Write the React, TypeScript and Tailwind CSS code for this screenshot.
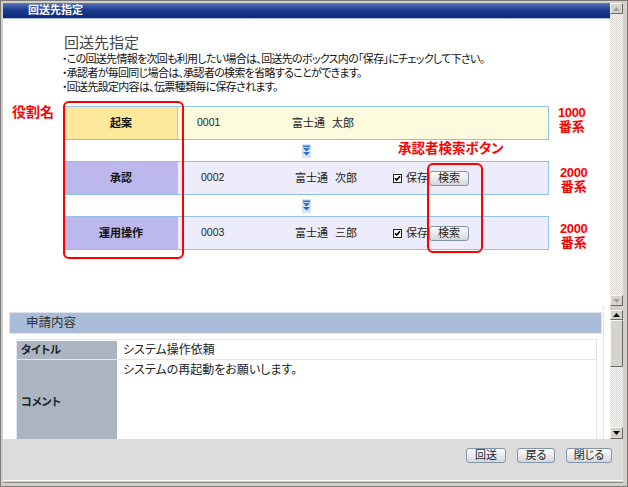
import React from "react";

const F =
  "font-['Liberation_Sans','Noto_Sans_CJK_JP',sans-serif] [font-feature-settings:'palt']";

function ScrollBtn({ up, dim, h }: { up?: boolean; dim?: boolean; h: string }) {
  return (
    <div
      className={`${h} w-full shrink-0 bg-[#d6d3cc] border border-t-[#f6f6f6] border-l-[#f6f6f6] border-r-[#6b6b6b] border-b-[#6b6b6b] flex items-center justify-center`}
    >
      <svg width="7" height="4" viewBox="0 0 7 4">
        <path d={up ? "M0 4L3.5 0L7 4Z" : "M0 0L3.5 4L7 0Z"} fill={dim ? "#a0a0a0" : "#000"} />
      </svg>
    </div>
  );
}

function Track() {
  return (
    <div className="flex-1 bg-[#ebe9e3] bg-[image:repeating-conic-gradient(#f8f7f3_0%_25%,#d9d7cf_0%_50%)] bg-[length:2px_2px]" />
  );
}

function Chev() {
  return (
    <div className="h-[21px] flex items-center justify-center">
      <div className="w-[9px] h-[14px] bg-[#d5e5f7] flex items-center justify-center">
        <svg width="9" height="12" viewBox="0 0 9 12">
          <rect x="1" y="0.5" width="7" height="1.6" fill="#2e6ed2" />
          <path d="M1 3H8L4.5 6.5Z" fill="#2e6ed2" />
          <path d="M1 7H8L4.5 10.5Z" fill="#2e6ed2" />
        </svg>
      </div>
    </div>
  );
}

function Check() {
  return (
    <svg width="9" height="9" viewBox="0 0 9 9" className="shrink-0">
      <rect x="0.5" y="0.5" width="8" height="8" fill="#fff" stroke="#222" />
      <path d="M2 4.2L3.7 6L7 2.3" fill="none" stroke="#000" strokeWidth="1.6" />
    </svg>
  );
}

function SmallBtn({ children, w }: { children: React.ReactNode; w: string }) {
  return (
    <div
      className={`${w} h-[15px] shrink-0 rounded-[3px] border border-[#8395a8] bg-[linear-gradient(#fbfbfb,#e9ebee_50%,#d3d7dc)] text-[11px] leading-[13px] text-center text-[#222]`}
    >
      {children}
    </div>
  );
}

function Row({
  role,
  roleBg,
  bg,
  numBox,
  num,
  name1,
  name2,
  save,
}: {
  role: string;
  roleBg: string;
  bg: string;
  numBox: string;
  num: string;
  name1: string;
  name2: string;
  save?: boolean;
}) {
  return (
    <div className={`h-[34px] border border-[#8ec2ea] flex ${bg}`}>
      <div
        className={`w-[113px] border-r border-[#a9cbe9] ${roleBg} flex items-center justify-center font-bold text-[11px] text-[#111]`}
      >
        {role}
      </div>
      <div className="flex-1 flex items-center text-[11px]">
        <span className={`${numBox} text-[10.5px]`}>{num}</span>
        <span className="w-[98px] shrink-0 flex gap-[7px]">
          <span>{name1}</span>
          <span>{name2}</span>
        </span>
        {save && (
          <>
            <Check />
            <span className="ml-[4px] w-[23px] shrink-0">保存</span>
            <SmallBtn w="w-[40px]">検索</SmallBtn>
          </>
        )}
      </div>
    </div>
  );
}

function Ann({ pos, n }: { pos: string; n: string }) {
  return (
    <div className={`absolute ${pos} text-[13px] leading-[14px] font-bold text-[#ff0000] text-center`}>
      <div className="tracking-[-0.4px]">{n}</div>
      <div>番系</div>
    </div>
  );
}

export default function App() {
  return (
    <div
      className={`relative w-[628px] h-[487px] overflow-hidden bg-[#d4d0c8] border border-[#7a7a7a] pl-[2px] pt-[2px] pr-[4px] flex flex-col text-[#222] ${F}`}
    >
      {/* top panel */}
      <div className="h-[303px] flex shrink-0">
        <div className="flex-1 bg-white flex flex-col overflow-hidden">
          <div className="h-[15px] shrink-0 bg-[linear-gradient(#5a78bd,#1d3c8f_45%,#0b2878)] text-white font-bold text-[11px] leading-[15px] pl-[25px]">
            回送先指定
          </div>
          <div className="h-px shrink-0 bg-[#a9bfe4]" />
          <div className="pl-[61px]">
            <div className="mt-[15px] text-[15px] leading-[18px] text-[#454545]">回送先指定</div>
            <div className="-ml-[2px] text-[11px] leading-[14px] tracking-[-0.7px] text-[#111]">
              <p>・この回送先情報を次回も利用したい場合は、回送先のボックス内の「保存」にチェックして下さい。</p>
              <p>・承認者が毎回同じ場合は、承認者の検索を省略することができます。</p>
              <p>・回送先設定内容は、伝票種類毎に保存されます。</p>
            </div>
            <div className="mt-[12px] w-[485px] flex flex-col">
              <Row
                role="起案"
                roleBg="bg-[#fde89b]"
                bg="bg-[#fdfbdd]"
                numBox="w-[114px] pl-[19px] shrink-0"
                num="0001"
                name1="富士通"
                name2="太郎"
              />
              <Chev />
              <Row
                role="承認"
                roleBg="bg-[#bcb7ec]"
                bg="bg-[#ececfb]"
                numBox="w-[117px] pl-[23px] shrink-0"
                num="0002"
                name1="富士通"
                name2="次郎"
                save
              />
              <Chev />
              <Row
                role="運用操作"
                roleBg="bg-[#bcb7ec]"
                bg="bg-[#ececfb]"
                numBox="w-[117px] pl-[23px] shrink-0"
                num="0003"
                name1="富士通"
                name2="三郎"
                save
              />
            </div>
          </div>
        </div>
        <div className="w-[13px] flex flex-col">
          <ScrollBtn up dim h="h-[11px]" />
          <Track />
          <ScrollBtn dim h="h-[11px]" />
        </div>
      </div>

      {/* bottom panel */}
      <div className="h-[133px] flex shrink-0">
        <div className="flex-1 bg-white overflow-hidden">
          <div className="ml-[6px] w-[595px] h-full border-r border-dotted border-[#cfd3da] pt-[6px]">
            <div className="border border-[#dfe4ea] w-[593px]">
              <div className="h-[20px] bg-[#a9bdd9] text-[12.5px] leading-[20px] pl-[16px] text-[#333]">
                申請内容
              </div>
            </div>
            <div className="ml-[7px] mt-[5px] w-[581px] border border-[#e3e7ed] pt-px">
              <div className="flex h-[19px] border-b border-[#e3e7ed]">
                <div className="w-[100px] bg-[#abb5c2] font-bold text-[11px] leading-[18px] pl-[4px] text-[#222]">
                  タイトル
                </div>
                <div className="flex-1 text-[12px] leading-[18px] pl-[6px]">システム操作依頼</div>
              </div>
              <div className="flex h-[84px]">
                <div className="w-[100px] bg-[#abb5c2] font-bold text-[11px] flex items-center pl-[4px] text-[#222]">
                  コメント
                </div>
                <div className="flex-1 text-[12px] leading-[18px] pl-[6px] pt-[1px]">
                  システムの再起動をお願いします。
                </div>
              </div>
            </div>
          </div>
        </div>
        <div className="w-[13px] flex flex-col pt-[4px]">
          <ScrollBtn up h="h-[10px]" />
          <div className="h-[47px] shrink-0 bg-[#d6d3cc] border border-t-[#f6f6f6] border-l-[#f6f6f6] border-r-[#6b6b6b] border-b-[#6b6b6b]" />
          <Track />
          <ScrollBtn h="h-[12px]" />
        </div>
      </div>

      {/* button bar */}
      <div className="h-[41px] shrink-0 bg-[#dcdcdc] flex justify-end items-start pt-[9px] pr-[11px] gap-[11px]">
        <SmallBtn w="w-[40px]">回送</SmallBtn>
        <SmallBtn w="w-[38px]">戻る</SmallBtn>
        <SmallBtn w="w-[46px]">閉じる</SmallBtn>
      </div>
      <div className="h-px shrink-0 bg-white" />
      <div className="h-px shrink-0 mt-px bg-[#8a8a8a]" />

      {/* red annotations */}
      <div className="absolute left-[11px] top-[104px] text-[14px] leading-[14px] font-bold text-[#ff0000]">
        役割名
      </div>
      <div className="absolute left-[62px] top-[100px] w-[121px] h-[158px] border-2 border-[#ff0000] rounded-[6px]" />
      <div className="absolute left-[397px] top-[141px] text-[13.5px] leading-[14px] font-bold text-[#ff0000]">
        承認者検索ボタン
      </div>
      <div className="absolute left-[426px] top-[162px] w-[56px] h-[90px] border-2 border-[#ff0000] rounded-[6px]" />
      <Ann pos="left-[557px] top-[105px]" n="1000" />
      <Ann pos="left-[559px] top-[165px]" n="2000" />
      <Ann pos="left-[559px] top-[221px]" n="2000" />
    </div>
  );
}
